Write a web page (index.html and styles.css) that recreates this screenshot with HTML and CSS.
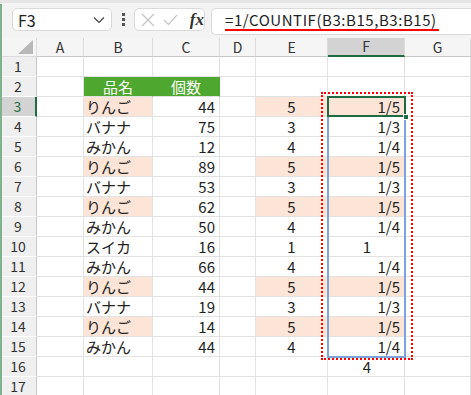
FILE: index.html
```html
<!DOCTYPE html>
<html>
<head>
	<meta charset="utf-8">
	<title>COUNTIF</title>
	<link rel="stylesheet" href="styles.css">
</head>
<body>
<div id="app">
	<div class="edge"></div>

	<div class="bar">
		<div class="namebox">
			<span>F3</span>
			<svg width="12" height="8" viewBox="0 0 12 8"><path d="M1 1.5 L6 6.5 L11 1.5" fill="none" stroke="#444" stroke-width="1.2"/></svg>
		</div>
		<div class="dots"><i></i><i></i><i></i></div>
		<div class="fxbtns">
			<svg width="14" height="14" viewBox="0 0 14 14"><path d="M1 1 L13 13 M13 1 L1 13" stroke="#c4c4c4" stroke-width="1.2"/></svg>
			<svg width="15" height="12" viewBox="0 0 15 12"><path d="M1 6 L5.5 10.5 L14 1" fill="none" stroke="#c4c4c4" stroke-width="1.2"/></svg>
			<span class="fx">fx</span>
		</div>
		<div class="formula"><span class="ftext">=1/COUNTIF(B3:B15,B3:B15)</span></div>
	</div>

	<div class="sheet">
		<div class="grid">
			<div class="row">
				<div class="corner"><svg width="16" height="14" viewBox="0 0 16 14"><path d="M15 0 L15 14 L0 14 Z" fill="#b8b8b8"/></svg></div>
				<div class="ch">A</div><div class="ch">B</div><div class="ch">C</div><div class="ch">D</div><div class="ch">E</div><div class="ch sel">F</div><div class="ch">G</div>
			</div>
			<div class="row">
				<div class="rh">1</div><div class="c"></div><div class="c"></div><div class="c"></div><div class="c"></div><div class="c"></div><div class="c"></div><div class="c"></div>
			</div>
			<div class="row">
				<div class="rh">2</div><div class="c"></div><div class="c head">品名</div><div class="c head">個数</div><div class="c"></div><div class="c"></div><div class="c"></div><div class="c"></div>
			</div>
			<div class="row">
				<div class="rh sel">3</div><div class="c"></div><div class="c txt pink">りんご</div><div class="c num">44</div><div class="c"></div><div class="c mid pink">5</div><div class="c num pink">1/5</div><div class="c"></div>
			</div>
			<div class="row">
				<div class="rh">4</div><div class="c"></div><div class="c txt">バナナ</div><div class="c num">75</div><div class="c"></div><div class="c mid">3</div><div class="c num">1/3</div><div class="c"></div>
			</div>
			<div class="row">
				<div class="rh">5</div><div class="c"></div><div class="c txt">みかん</div><div class="c num">12</div><div class="c"></div><div class="c mid">4</div><div class="c num">1/4</div><div class="c"></div>
			</div>
			<div class="row">
				<div class="rh">6</div><div class="c"></div><div class="c txt pink">りんご</div><div class="c num">89</div><div class="c"></div><div class="c mid pink">5</div><div class="c num pink">1/5</div><div class="c"></div>
			</div>
			<div class="row">
				<div class="rh">7</div><div class="c"></div><div class="c txt">バナナ</div><div class="c num">53</div><div class="c"></div><div class="c mid">3</div><div class="c num">1/3</div><div class="c"></div>
			</div>
			<div class="row">
				<div class="rh">8</div><div class="c"></div><div class="c txt pink">りんご</div><div class="c num">62</div><div class="c"></div><div class="c mid pink">5</div><div class="c num pink">1/5</div><div class="c"></div>
			</div>
			<div class="row">
				<div class="rh">9</div><div class="c"></div><div class="c txt">みかん</div><div class="c num">50</div><div class="c"></div><div class="c mid">4</div><div class="c num">1/4</div><div class="c"></div>
			</div>
			<div class="row">
				<div class="rh">10</div><div class="c"></div><div class="c txt">スイカ</div><div class="c num">16</div><div class="c"></div><div class="c mid">1</div><div class="c num whole">1</div><div class="c"></div>
			</div>
			<div class="row">
				<div class="rh">11</div><div class="c"></div><div class="c txt">みかん</div><div class="c num">66</div><div class="c"></div><div class="c mid">4</div><div class="c num">1/4</div><div class="c"></div>
			</div>
			<div class="row">
				<div class="rh">12</div><div class="c"></div><div class="c txt pink">りんご</div><div class="c num">44</div><div class="c"></div><div class="c mid pink">5</div><div class="c num pink">1/5</div><div class="c"></div>
			</div>
			<div class="row">
				<div class="rh">13</div><div class="c"></div><div class="c txt">バナナ</div><div class="c num">19</div><div class="c"></div><div class="c mid">3</div><div class="c num">1/3</div><div class="c"></div>
			</div>
			<div class="row">
				<div class="rh">14</div><div class="c"></div><div class="c txt pink">りんご</div><div class="c num">14</div><div class="c"></div><div class="c mid pink">5</div><div class="c num pink">1/5</div><div class="c"></div>
			</div>
			<div class="row">
				<div class="rh">15</div><div class="c"></div><div class="c txt">みかん</div><div class="c num">44</div><div class="c"></div><div class="c mid">4</div><div class="c num">1/4</div><div class="c"></div>
			</div>
			<div class="row">
				<div class="rh">16</div><div class="c"></div><div class="c"></div><div class="c"></div><div class="c"></div><div class="c"></div><div class="c num whole">4</div><div class="c"></div>
			</div>
			<div class="row">
				<div class="rh">17</div><div class="c"></div><div class="c"></div><div class="c"></div><div class="c"></div><div class="c"></div><div class="c"></div><div class="c"></div>
			</div>
		</div>

		<!-- overlays on top of the grid -->
		<div class="range"></div>
		<div class="active"><span class="handle"></span></div>
		<div class="marquee"></div>
	</div>
</div>
</body>
</html>
```

FILE: styles.css
```css
*{
	box-sizing: border-box;
}
body{
	margin:0;
	padding:0;
	background:#fff;
	font-family: "Noto Sans CJK JP", "Noto Sans", sans-serif;
	color:#222;
}
#app{
	width:471px;
	height:395px;
	overflow:hidden;
	position:relative;
}
.edge{
	position:absolute;
	left:0;
	top:4px;
	width:2px;
	height:391px;
	background:#7fb38d;
	z-index:5;
}

/* formula bar */
.bar{
	height:38px;
	background:#f3f3f3;
	border-top:3px solid #e6e6e6;
	display:flex;
	align-items:flex-start;
	padding:5px 0 0 12px;
}
.namebox{
	width:100px;
	height:23px;
	background:#fff;
	border:1px solid #dadada;
	border-radius:5px;
	display:flex;
	align-items:center;
	justify-content:space-between;
	padding:0 6px 0 5px;
	font-size:16px;
	color:#222;
}
.dots{
	width:22px;
	height:23px;
	display:flex;
	flex-direction:column;
	align-items:center;
	justify-content:center;
	gap:2px;
}
.dots i{
	display:block;
	width:3px;
	height:3px;
	background:#555;
}
.fxbtns{
	width:71px;
	height:23px;
	background:#fff;
	border:1px solid #dadada;
	border-radius:5px;
	display:flex;
	align-items:center;
	gap:8px;
	padding:0 0 0 6px;
}
.fx{
	font-family: "Liberation Serif", serif;
	font-style:italic;
	font-weight:bold;
	font-size:17px;
	color:#333;
	margin-left:4px;
	line-height:1;
}
.formula{
	flex:1;
	height:27px;
	margin-left:6px;
	background:#fff;
	border:1px solid #dadada;
	border-right:none;
	border-radius:5px 0 0 5px;
	padding:0 0 0 13px;
	font-size:15px;
	line-height:22px;
}
.ftext{
	display:inline-block;
	border-bottom:2px solid #f00;
	line-height:19px;
	letter-spacing:0.55px;
	padding-right:2px;
}

/* sheet */
.sheet{
	position:relative;
}
.grid{
	display:grid;
	grid-template-columns:37px 47px 69px 67px 36px 72px 77px 66px;
	grid-template-rows:19px;
	grid-auto-rows:20px;
	font-size:15px;
}
.row{
	display:contents;
}
.corner{
	background:#f5f5f5;
	border-right:1px solid #dcdcdc;
	border-bottom:1px solid #dcdcdc;
	display:flex;
	align-items:flex-end;
	justify-content:flex-end;
	padding:0 2px 2px 0;
}
.ch{
	background:#f5f5f5;
	border-right:1px solid #dcdcdc;
	border-bottom:1px solid #c8c8c8;
	text-align:center;
	font-size:14px;
	line-height:18px;
	color:#333;
}
.ch.sel{
	background:#d3d3d3;
	border-bottom:2px solid #1e6b41;
	line-height:17px;
}
.rh{
	background:#efefef;
	border-right:1px solid #c8c8c8;
	border-bottom:1px solid #fff;
	text-align:center;
	font-size:14px;
	line-height:19px;
	color:#333;
}
.rh.sel{
	background:#d3d3d3;
	color:#1e6b41;
	border-right:2px solid #1e6b41;
}
.c{
	border-right:1px solid #e2e2e2;
	border-bottom:1px solid #e2e2e2;
	line-height:19px;
	white-space:nowrap;
	overflow:visible;
}
.txt{
	padding-left:2px;
}
.num{
	text-align:right;
	padding-right:4px;
}
.mid{
	text-align:center;
}
.whole{
	padding-right:33px;
}
.pink{
	background:#fce4d6;
}
.head{
	background:#4ea72e;
	color:#fff;
	text-align:center;
	border-right-color:#4ea72e;
}

/* selection overlays */
.range{
	position:absolute;
	left:327px;
	top:78px;
	width:79px;
	height:242px;
	border:2px solid #7ea3db;
	border-top:none;
}
.active{
	position:absolute;
	left:327px;
	top:58px;
	width:79px;
	height:21px;
	border:2px solid #1e6b41;
}
.handle{
	position:absolute;
	right:-5px;
	bottom:-5px;
	width:6px;
	height:6px;
	background:#1e6b41;
	border:1px solid #fff;
}
.marquee{
	position:absolute;
	left:321px;
	top:54px;
	width:92px;
	height:268px;
	border:2px dotted #f00;
}
```
